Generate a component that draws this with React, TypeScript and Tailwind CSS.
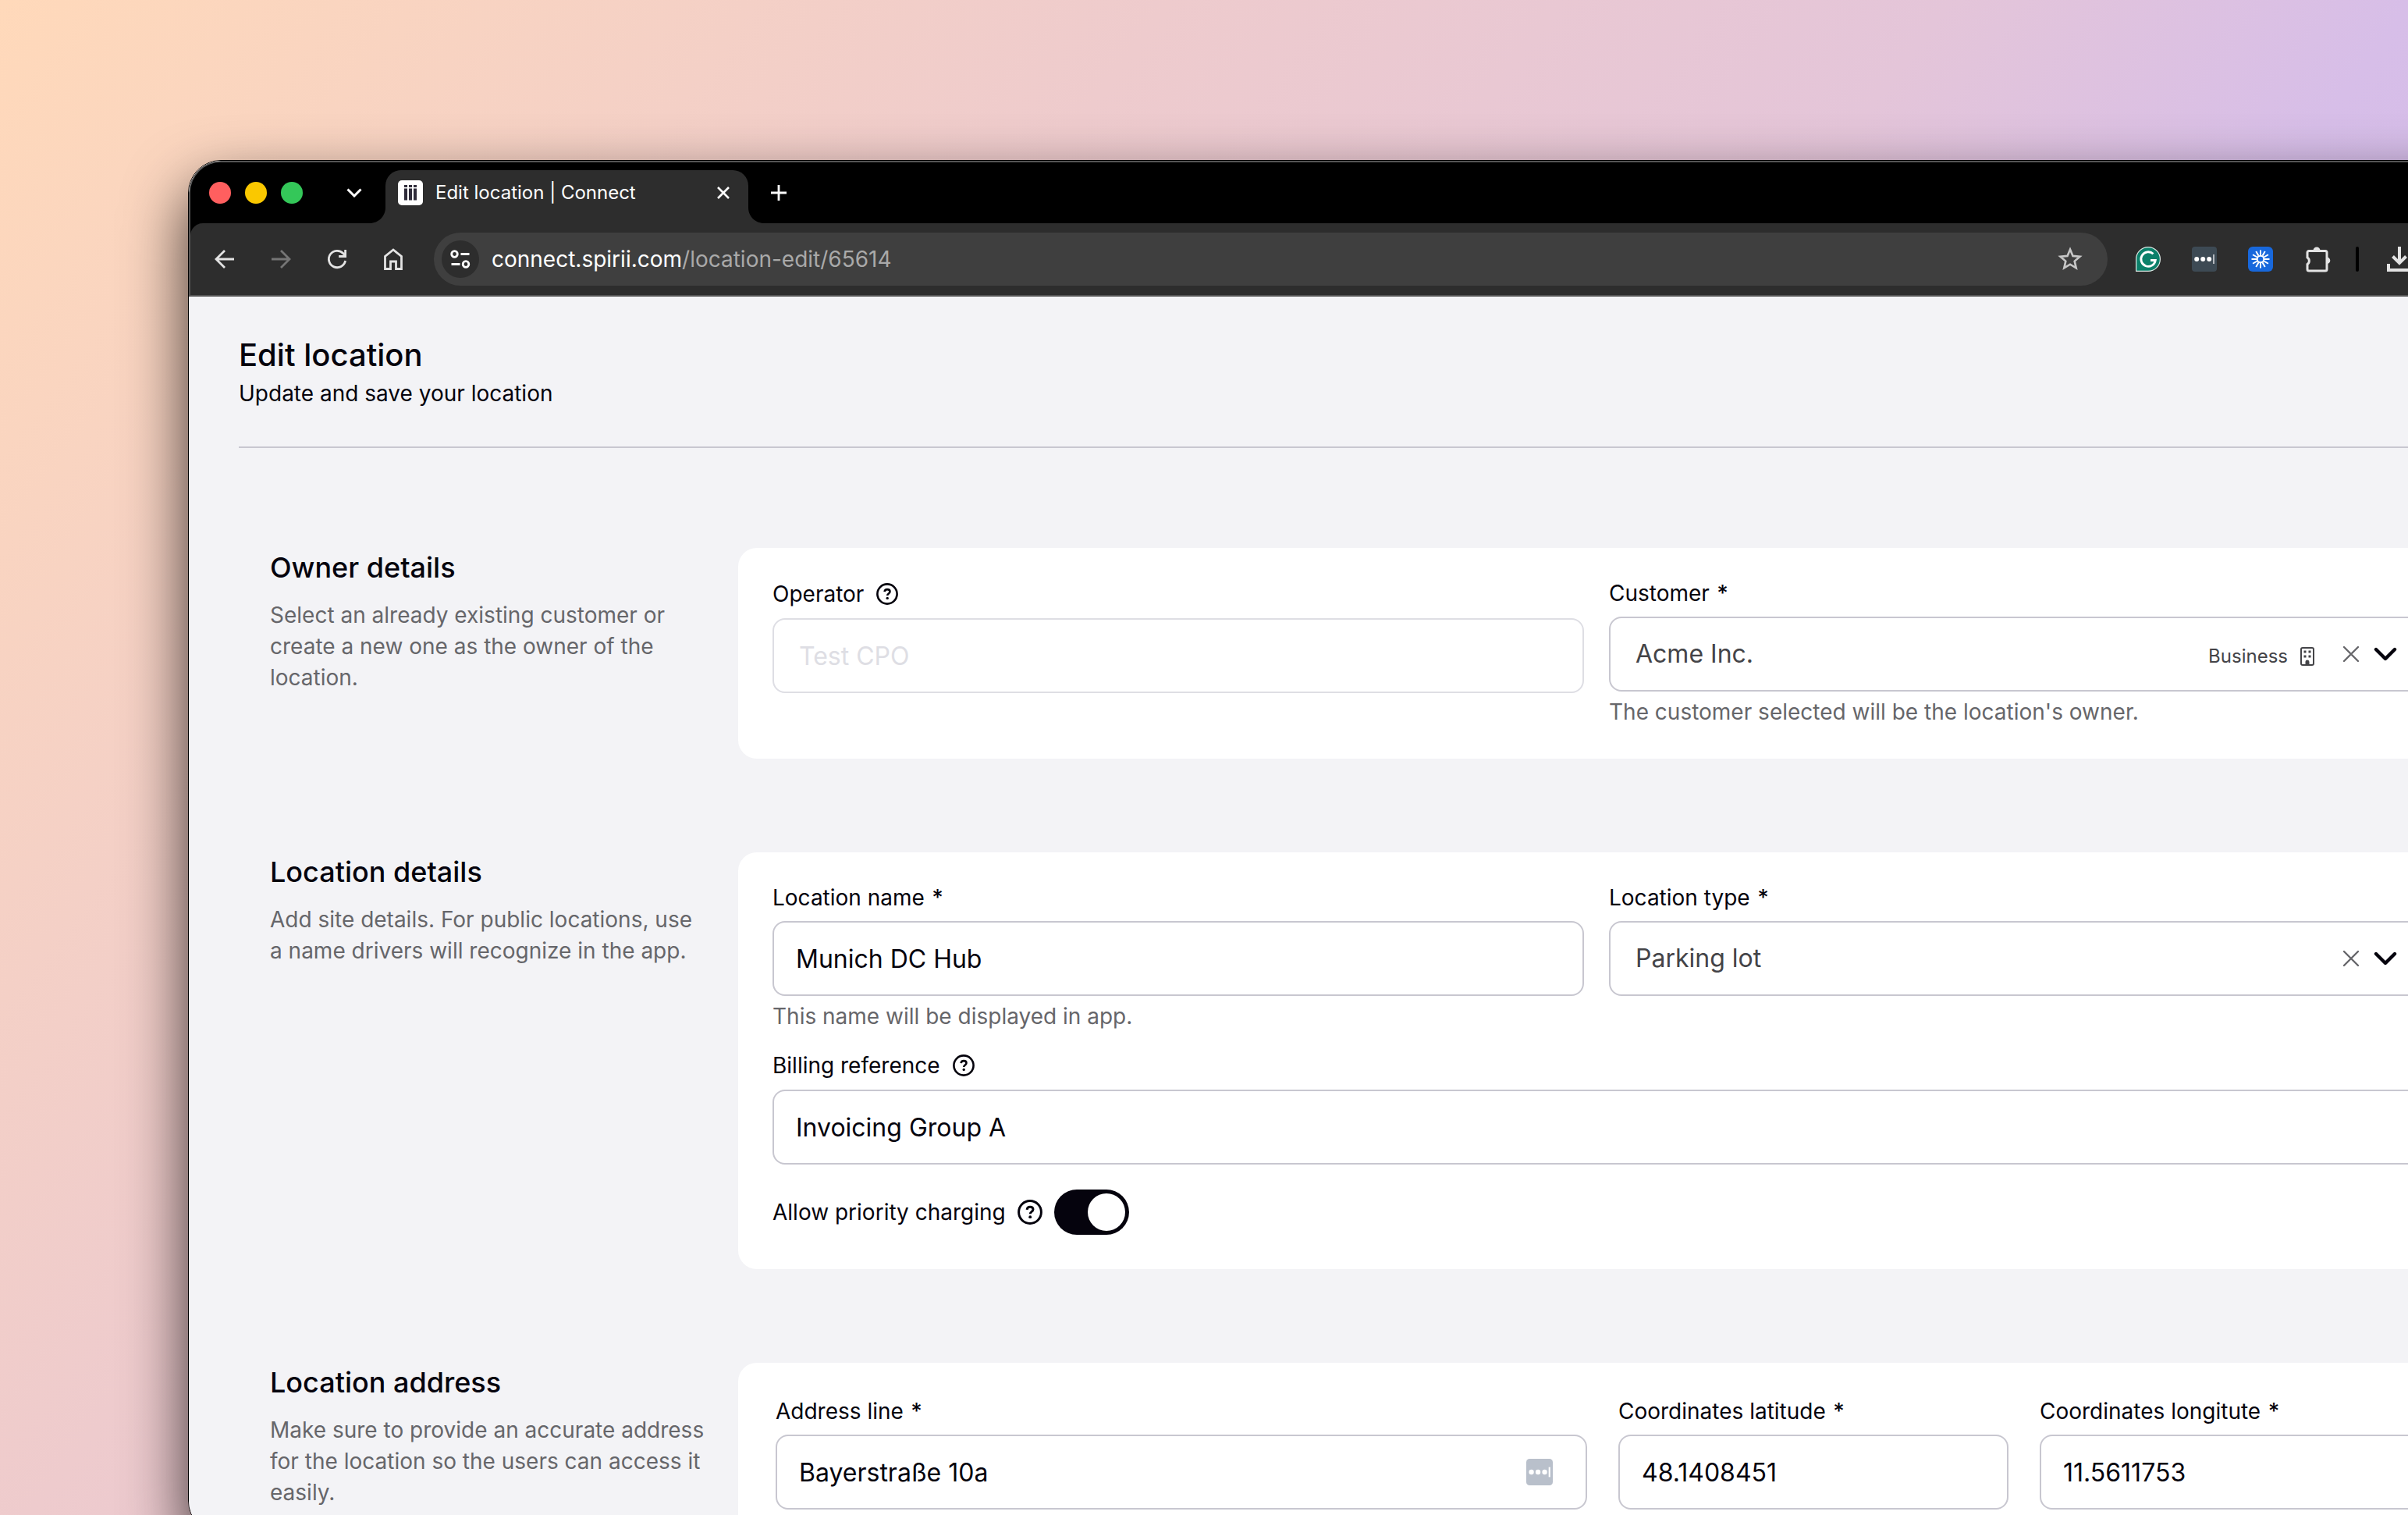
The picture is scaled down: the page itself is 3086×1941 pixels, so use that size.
import { useId, type ReactNode } from "react";

const spokes = [0, 30, 60, 90, 120, 150, 180, 210, 240, 270, 300, 330];

function HelpIcon({ className }: { className: string }) {
  return (
    <svg viewBox="0 0 28 28" className={className} fill="none" aria-hidden="true">
      <circle cx="14" cy="14" r="12.6" stroke="currentColor" strokeWidth="2.6" />
      <path
        d="M10.6 11.2c.2-2 1.6-3.1 3.5-3.100 2 0 3.400 1.100 3.400 2.900 0 2.400-3.300 2.500-3.300 4.900"
        stroke="currentColor"
        strokeWidth="2.600"
      />
      <circle cx="14.200" cy="19.400" r="1.700" fill="currentColor" />
    </svg>
  );
}

function ClearIcon() {
  return (
    <svg viewBox="0 0 22 22" className="size-[22px]" fill="none" aria-hidden="true">
      <path d="M2 2l18 18M20 2L2 20" stroke="#66666a" strokeWidth="2.400" strokeLinecap="round" />
    </svg>
  );
}

function DownIcon() {
  return (
    <svg viewBox="0 0 30 18" className="h-[18px] w-[30px]" fill="none" aria-hidden="true">
      <path d="M3 3l12 12L27 3" stroke="#05030d" strokeWidth="4.400" strokeLinecap="round" strokeLinejoin="round" />
    </svg>
  );
}

function BuildingIcon() {
  return (
    <svg viewBox="0 0 18 24" className="h-6 w-[18px]" fill="none" aria-hidden="true">
      <rect x="1" y="1" width="16" height="22" rx="2" stroke="#444448" strokeWidth="2" />
      <path d="M4.500 4.500h3v3h-3zM10.500 4.500h3v3h-3zM4.500 10.500h3v3h-3zM10.500 10.500h3v3h-3z" fill="#444448" />
      <path d="M6.500 22.500v-3.500a2.500 2.500 0 0 1 5 0v3.500z" fill="#444448" />
    </svg>
  );
}

function PasswordIcon({ className, back, bar }: { className: string; back: string; bar: string }) {
  return (
    <svg viewBox="0 0 32 32" className={className} aria-hidden="true">
      <rect width="32" height="32" rx="4" fill={back} />
      <circle cx="6.200" cy="16" r="3" fill="#fff" />
      <circle cx="14.200" cy="16" r="3" fill="#fff" />
      <circle cx="22.200" cy="16" r="3" fill="#fff" />
      <rect x="27" y="10" width="2" height="12" fill={bar} />
    </svg>
  );
}

function TabStrip() {
  return (
    <div className="flex h-[78px] shrink-0 items-end bg-black">
      <div className="flex h-[68px] items-center">
        <div className="flex gap-[18px] pb-[10px] pl-6">
          <button aria-label="Close window" className="size-7 rounded-full bg-[#ff5f5f]" />
          <button aria-label="Minimise window" className="size-7 rounded-full bg-[#fac800]" />
          <button aria-label="Zoom window" className="size-7 rounded-full bg-[#34c759]" />
        </div>
        <button aria-label="Search tabs" className="ml-14 pb-[10px]">
          <svg viewBox="0 0 20 12" className="h-3 w-5" fill="none" aria-hidden="true">
            <path d="M1.500 1.500L10 10l8.500-8.500" stroke="#fff" strokeWidth="3" />
          </svg>
        </button>
      </div>
      <div className="ml-[10px] flex h-[68px] items-end">
        <svg viewBox="0 0 20 20" className="size-5" aria-hidden="true">
          <path d="M20 0v20H0C11 20 20 11 20 0z" fill="#2d2d2d" />
        </svg>
        <div className="flex h-full w-[465px] items-center rounded-t-[20px] bg-[#2d2d2d] pr-[22px] pb-[10px] pl-4">
          <svg viewBox="0 0 32 32" className="size-8" aria-hidden="true">
            <rect width="32" height="32" rx="5" fill="#fff" />
            <path
              d="M8 6h4v3H8zM14 6h4v3h-4zM20 6h4v3h-4zM8 10.500h4v15H8zM14 10.500h4v15h-4zM20 10.500h4v15h-4z"
              fill="#2f2c3a"
            />
          </svg>
          <span className="ml-4 flex-1 text-2xl whitespace-nowrap text-white">Edit location | Connect</span>
          <button aria-label="Close tab">
            <svg viewBox="0 0 20 20" className="size-5" fill="none" aria-hidden="true">
              <path d="M3 3l14 14M17 3L3 17" stroke="#fff" strokeWidth="2.600" />
            </svg>
          </button>
        </div>
        <svg viewBox="0 0 20 20" className="size-5" aria-hidden="true">
          <path d="M0 0v20h20C9 20 0 11 0 0z" fill="#2d2d2d" />
        </svg>
      </div>
      <button aria-label="New tab" className="ml-[9px] flex h-[68px] items-center pb-[10px]">
        <svg viewBox="0 0 20 20" className="size-5" fill="none" aria-hidden="true">
          <path d="M10 0v20M0 10h20" stroke="#fff" strokeWidth="2.800" />
        </svg>
      </button>
    </div>
  );
}

function Toolbar() {
  return (
    <div className="flex h-[94px] shrink-0 items-center rounded-tl-2xl border-b-2 border-[#555] bg-[#2d2d2d] pl-7 text-[#e3e3e3]">
      <div className="flex items-center gap-10">
        <button aria-label="Back">
          <svg viewBox="0 0 32 32" className="size-8" fill="none" aria-hidden="true">
            <path d="M28 16H6M16 5L5 16l11 11" stroke="currentColor" strokeWidth="2.800" />
          </svg>
        </button>
        <button aria-label="Forward" className="text-[#757575]">
          <svg viewBox="0 0 32 32" className="size-8" fill="none" aria-hidden="true">
            <path d="M4 16h22M16 5l11 11-11 11" stroke="currentColor" strokeWidth="2.800" />
          </svg>
        </button>
        <button aria-label="Reload">
          <svg viewBox="0 0 32 32" className="size-8" fill="none" aria-hidden="true">
            <path d="M26.600 18A10.700 10.700 0 1 1 24 8.800L26.500 11.500" stroke="currentColor" strokeWidth="2.800" />
            <path d="M26.600 4v8.500h-8.500" stroke="currentColor" strokeWidth="2.800" />
          </svg>
        </button>
        <button aria-label="Home">
          <svg viewBox="0 0 32 32" className="size-8" fill="none" aria-hidden="true">
            <path
              d="M5.500 28.500V12.500L16 4l10.500 8.500v16h-7V19h-7v9.500z"
              stroke="currentColor"
              strokeWidth="2.800"
            />
          </svg>
        </button>
      </div>
      <div className="ml-9 flex h-[68px] flex-1 items-center rounded-full bg-[#3f3f3f] pr-8 pl-[10px]">
        <button
          aria-label="Site information"
          className="flex size-12 items-center justify-center rounded-full bg-[#2d2d2d] text-white"
        >
          <svg viewBox="0 0 26 24" className="h-6 w-[26px]" fill="none" aria-hidden="true">
            <circle cx="5.500" cy="5.500" r="3.800" stroke="currentColor" strokeWidth="2.800" />
            <circle cx="20" cy="18.500" r="3.800" stroke="currentColor" strokeWidth="2.800" />
            <path d="M13.500 5.500h11M1.500 18.500h11" stroke="currentColor" strokeWidth="2.800" />
          </svg>
        </button>
        <span className="ml-4 flex-1 text-[28px] whitespace-nowrap text-[#a9a9a9]">
          <span className="text-white">connect.spirii.com</span>/location-edit/65614
        </span>
        <button aria-label="Bookmark this page" className="text-[#c7c7c7]">
          <svg viewBox="0 0 32 32" className="size-8" fill="none" aria-hidden="true">
            <path
              d="M16 3.600l3.500 8.300 9 .8-6.800 5.900 2 8.800L16 22.700l-7.700 4.700 2-8.800-6.800-5.900 9-.8z"
              stroke="currentColor"
              strokeWidth="2.600"
            />
          </svg>
        </button>
      </div>
      <div className="mr-[159px] ml-9 flex items-center">
        <button aria-label="Grammarly">
          <svg viewBox="0 0 32 32" className="size-8" fill="none" aria-hidden="true">
            <path d="M.6 31.400V16A15.400 15.400 0 1 1 16 31.400z" fill="#0b806a" stroke="#dfe9e6" strokeWidth="1.200" />
            <path d="M22.500 9.300a9.300 9.300 0 1 0 2.800 8.200h-6.300" stroke="#fff" strokeWidth="2.800" />
          </svg>
        </button>
        <button aria-label="Password manager" className="ml-10">
          <PasswordIcon className="size-8" back="#3d4a54" bar="#b4b9be" />
        </button>
        <button aria-label="Extension" className="ml-10">
          <svg viewBox="0 0 32 32" className="size-8" aria-hidden="true">
            <rect width="32" height="32" rx="6" fill="#1868dc" />
            <circle cx="16" cy="16" r="4.300" fill="none" stroke="#fff" strokeWidth="2" />
            {spokes.map((angle) => (
              <path key={angle} d="M16 11V4.500" stroke="#fff" strokeWidth="2" transform={`rotate(${angle} 16 16)`} />
            ))}
          </svg>
        </button>
        <button aria-label="Extensions" className="ml-10">
          <svg viewBox="0 0 34 34" className="size-[34px]" fill="none" aria-hidden="true">
            <path
              d="M4 8.500a2 2 0 0 1 2-2h21a2 2 0 0 1 2 2V30a2 2 0 0 1-2 2H6a2 2 0 0 1-2-2v-6.500a5 5 0 0 0 0-8.500z"
              stroke="currentColor"
              strokeWidth="3"
            />
            <path d="M11.500 6a4.500 4.500 0 0 1 9 0zM29 14.500a4.300 4.300 0 0 1 0 8.600z" fill="currentColor" />
          </svg>
        </button>
        <div className="ml-8 h-8 w-1 rounded-full bg-black" />
        <button aria-label="Downloads" className="ml-9">
          <svg viewBox="0 0 32 32" className="size-8" fill="none" aria-hidden="true">
            <path d="M16 0v21M7.500 12.500L16 21l8.500-8.500M2 22v8h28v-8" stroke="currentColor" strokeWidth="4" />
          </svg>
        </button>
      </div>
    </div>
  );
}

function Section({ title, text, children }: { title: string; text: string; children: ReactNode }) {
  return (
    <section className="flex">
      <div className="w-[600px] shrink-0 pr-10">
        <h2 className="text-4xl leading-[50px] font-medium text-[#05030d]">{title}</h2>
        <p className="mt-4 text-[28px] leading-10 text-[#66666a]">{text}</p>
      </div>
      {children}
    </section>
  );
}

function FieldLabel({ id, label, required }: { id: string; label: string; required?: boolean }) {
  return (
    <label htmlFor={id} className="text-[28px] leading-10 whitespace-nowrap">
      {label}
      {required && <span className="ml-0.5 font-medium"> *</span>}
    </label>
  );
}

type FieldProps = {
  label: string;
  value: string;
  required?: boolean;
  help?: boolean;
  disabled?: boolean;
  hint?: string;
  manager?: boolean;
  className?: string;
};

function TextField({ label, value, required, help, disabled, hint, manager, className }: FieldProps) {
  const id = useId();
  return (
    <div className={className}>
      <div className={help ? "mb-[10px] flex h-[42px] items-center gap-4" : "mb-[10px] flex h-10 items-center"}>
        <FieldLabel id={id} label={label} required={required} />
        {help && <HelpIcon className="size-7" />}
      </div>
      <div
        className={
          disabled
            ? "flex h-24 items-center rounded-2xl border-2 border-[#dedee4] bg-white pl-8 text-[#dedee4]"
            : "flex h-24 items-center rounded-2xl border-2 border-[#c8c7d0] bg-white pr-[42px] pl-7"
        }
      >
        <input
          id={id}
          defaultValue={value}
          disabled={disabled}
          className="h-full w-full min-w-0 flex-1 bg-transparent text-[32px] outline-none"
        />
        {manager && (
          <button aria-label="Fill from password manager">
            <PasswordIcon className="size-[34px]" back="#b9c0cb" bar="#ffffff" />
          </button>
        )}
      </div>
      {hint && <p className="mt-[6px] text-[28px] leading-10 text-[#66666a]">{hint}</p>}
    </div>
  );
}

function SelectField({ label, value, hint, tag }: { label: string; value: string; hint?: string; tag?: string }) {
  const id = useId();
  return (
    <div>
      <div className="mb-[10px] flex h-10 items-center">
        <FieldLabel id={id} label={label} required />
      </div>
      <div className="flex h-24 items-center rounded-2xl border-2 border-[#c8c7d0] bg-white pr-7 pl-8 text-[#444448]">
        <select id={id} className="h-full min-w-0 flex-1 appearance-none bg-transparent text-[32px] outline-none">
          <option>{value}</option>
        </select>
        {tag && (
          <span className="mr-9 flex items-center gap-4 pt-1.5 text-2xl">
            {tag}
            <BuildingIcon />
          </span>
        )}
        <button aria-label="Clear selection" className="mr-[18px]">
          <ClearIcon />
        </button>
        <DownIcon />
      </div>
      {hint && <p className="mt-[6px] text-[28px] leading-10 text-[#66666a]">{hint}</p>}
    </div>
  );
}

export default function App() {
  return (
    <div className="h-screen overflow-hidden bg-[linear-gradient(127deg,#ffd9ba_0%,#eecbcd_33%,#e4c5d9_55%,#d7bee8_68%,#cbb5ee_100%)] pt-[205px] pl-[241px] font-[Inter,sans-serif] text-[#05030d]">
      <div className="-mr-[165px] h-[calc(100%+24px)] rounded-[42px] border border-black shadow-[0_36px_80px_0_rgba(0,0,0,0.75)]">
        <div className="flex h-full flex-col overflow-hidden rounded-[41px] bg-[#f3f3f6]">
          <div className="shrink-0 overflow-hidden rounded-tl-[41px] border-t-2 border-l-2 border-[#555] bg-black">
            <TabStrip />
            <Toolbar />
          </div>
          <main className="min-h-0 flex-1 overflow-hidden px-16 pt-[50px]">
            <header className="border-b-2 border-[#c8c7d0] pb-12">
              <h1 className="text-[40px] leading-[50px] font-medium">Edit location</h1>
              <p className="mt-1 text-[28px] leading-10">Update and save your location</p>
            </header>
            <div className="flex flex-col gap-[120px] px-10 pt-32">
              <Section
                title="Owner details"
                text="Select an already existing customer or create a new one as the owner of the location."
              >
                <div className="grid flex-1 grid-cols-2 gap-8 rounded-3xl bg-white px-11 pt-[38px] pb-10">
                  <TextField label="Operator" value="Test CPO" help disabled />
                  <SelectField
                    label="Customer"
                    value="Acme Inc."
                    tag="Business"
                    hint="The customer selected will be the location's owner."
                  />
                </div>
              </Section>
              <Section
                title="Location details"
                text="Add site details. For public locations, use a name drivers will recognize in the app."
              >
                <div className="flex-1 rounded-3xl bg-white px-11 pt-[38px] pb-11">
                  <div className="grid grid-cols-2 gap-8">
                    <TextField
                      label="Location name"
                      value="Munich DC Hub"
                      required
                      hint="This name will be displayed in app."
                    />
                    <SelectField label="Location type" value="Parking lot" />
                  </div>
                  <TextField label="Billing reference" value="Invoicing Group A" help className="mt-[22px]" />
                  <div className="mt-8 flex items-center gap-[15px]">
                    <FieldLabel id="priority" label="Allow priority charging" />
                    <HelpIcon className="size-8" />
                    <input
                      id="priority"
                      type="checkbox"
                      role="switch"
                      defaultChecked
                      className="h-[58px] w-24 appearance-none rounded-full bg-[#05030d] p-[5px] before:ml-auto before:block before:size-12 before:rounded-full before:bg-white"
                    />
                  </div>
                </div>
              </Section>
              <Section
                title="Location address"
                text="Make sure to provide an accurate address for the location so the users can access it easily."
              >
                <div className="grid flex-1 grid-cols-4 gap-10 rounded-3xl bg-white pt-[42px] pr-8 pb-11 pl-12">
                  <TextField label="Address line" value="Bayerstraße 10a" required manager className="col-span-2" />
                  <TextField label="Coordinates latitude" value="48.1408451" required />
                  <TextField label="Coordinates longitute" value="11.5611753" required />
                </div>
              </Section>
            </div>
          </main>
        </div>
      </div>
    </div>
  );
}
